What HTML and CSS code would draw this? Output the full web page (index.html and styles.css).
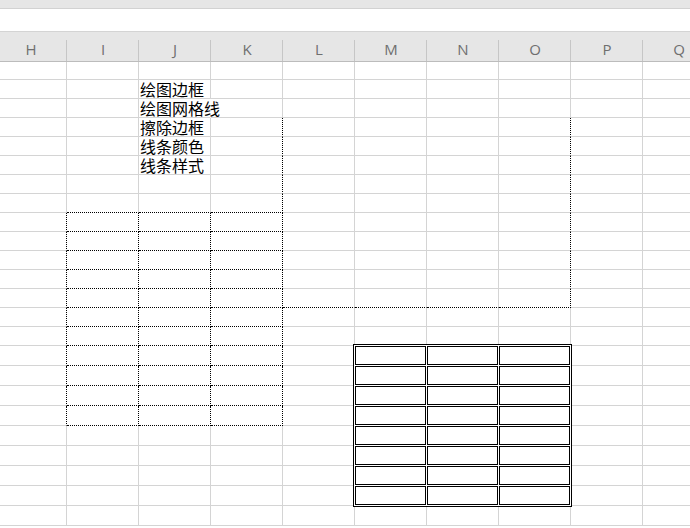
FILE: index.html
```html
<!DOCTYPE html>
<html lang="zh-CN">
<head>
<meta charset="utf-8">
<title>Sheet</title>
<link rel="stylesheet" href="styles.css">
</head>
<body>
<div class="app">
  <div class="ribbon-edge"></div>
  <div class="formula-bar"></div>
  <div class="col-headers">
    <div>H</div><div>I</div><div>J</div><div>K</div><div>L</div><div>M</div><div>N</div><div>O</div><div>P</div><div>Q</div>
  </div>
  <div class="sheet">
    <div class="cells">
      <div></div><div></div><div></div><div></div><div></div><div></div><div></div><div></div><div></div><div></div>
      <div></div><div></div><div class="txt">绘图边框</div><div></div><div></div><div></div><div></div><div></div><div></div><div></div>
      <div></div><div></div><div class="txt sp">绘图网格线</div><div></div><div></div><div></div><div></div><div></div><div></div><div></div>
      <div></div><div></div><div class="txt">擦除边框</div><div class="dr"></div><div></div><div></div><div></div><div class="dr"></div><div></div><div></div>
      <div></div><div></div><div class="txt">线条颜色</div><div class="dr"></div><div></div><div></div><div></div><div class="dr"></div><div></div><div></div>
      <div></div><div></div><div class="txt">线条样式</div><div class="dr"></div><div></div><div></div><div></div><div class="dr"></div><div></div><div></div>
      <div></div><div></div><div></div><div class="dr"></div><div></div><div></div><div></div><div class="dr"></div><div></div><div></div>
      <div></div><div class="db"></div><div class="db"></div><div class="dx"></div><div></div><div></div><div></div><div class="dr"></div><div></div><div></div>
      <div class="dr"></div><div class="dx"></div><div class="dx"></div><div class="dx"></div><div></div><div></div><div></div><div class="dr"></div><div></div><div></div>
      <div class="dr"></div><div class="dx"></div><div class="dx"></div><div class="dx"></div><div></div><div></div><div></div><div class="dr"></div><div></div><div></div>
      <div class="dr"></div><div class="dx"></div><div class="dx"></div><div class="dx"></div><div></div><div></div><div></div><div class="dr"></div><div></div><div></div>
      <div class="dr"></div><div class="dx"></div><div class="dx"></div><div class="dx"></div><div></div><div></div><div></div><div class="dr"></div><div></div><div></div>
      <div class="dr"></div><div class="dx"></div><div class="dx"></div><div class="dx"></div><div class="db"></div><div class="db"></div><div class="db"></div><div class="dx"></div><div></div><div></div>
      <div class="dr"></div><div class="dx"></div><div class="dx"></div><div class="dx"></div><div></div><div></div><div></div><div></div><div></div><div></div>
      <div class="dr"></div><div class="dx"></div><div class="dx"></div><div class="dx"></div><div></div><div></div><div></div><div></div><div></div><div></div>
      <div class="dr"></div><div class="dx"></div><div class="dx"></div><div class="dx"></div><div></div><div></div><div></div><div></div><div></div><div></div>
      <div class="dr"></div><div class="dx"></div><div class="dx"></div><div class="dx"></div><div></div><div></div><div></div><div></div><div></div><div></div>
      <div class="dr"></div><div class="dx"></div><div class="dx"></div><div class="dx"></div><div></div><div></div><div></div><div></div><div></div><div></div>
      <div class="dr"></div><div class="dx"></div><div class="dx"></div><div class="dx"></div><div></div><div></div><div></div><div></div><div></div><div></div>
      <div></div><div></div><div></div><div></div><div></div><div></div><div></div><div></div><div></div><div></div>
      <div></div><div></div><div></div><div></div><div></div><div></div><div></div><div></div><div></div><div></div>
      <div></div><div></div><div></div><div></div><div></div><div></div><div></div><div></div><div></div><div></div>
      <div></div><div></div><div></div><div></div><div></div><div></div><div></div><div></div><div></div><div></div>
      <div></div><div></div><div></div><div></div><div></div><div></div><div></div><div></div><div></div><div></div>
    </div>
    <div class="overlay">
      <div class="double-table">
        <div></div><div></div><div></div>
        <div></div><div></div><div></div>
        <div></div><div></div><div></div>
        <div></div><div></div><div></div>
        <div></div><div></div><div></div>
        <div></div><div></div><div></div>
        <div></div><div></div><div></div>
        <div></div><div></div><div></div>
      </div>
    </div>
  </div>
</div>
</body>
</html>
```
FILE: styles.css
```css
html, body {
  margin: 0;
  padding: 0;
  background: #ffffff;
  overflow: hidden;
}

.app {
  width: 690px;
  height: 528px;
  overflow: hidden;
  font-family: "Noto Sans CJK SC", "Noto Sans", sans-serif;
}

.ribbon-edge {
  height: 8px;
  background: #e6e6e6;
  border-bottom: 1px solid #d2d2d2;
}

.formula-bar {
  height: 22px;
  background: #ffffff;
  border-bottom: 1px solid #d4d4d4;
}

.col-headers {
  display: grid;
  grid-template-columns: repeat(10, 72px);
  margin-left: -5px;
  height: 29px;
  background: #e6e6e6;
  border-bottom: 1px solid #bcbcbc;
}

.col-headers > div {
  box-sizing: border-box;
  height: 29px;
  padding-top: 7px;
  line-height: 20px;
  text-align: center;
  font-family: "Open Sans", "Noto Sans", sans-serif;
  font-size: 15px;
  color: #6f6f6f;
  background-image: linear-gradient(#c6c6c6, #c6c6c6);
  background-size: 1px 21px;
  background-position: right bottom;
  background-repeat: no-repeat;
}

.sheet {
  display: grid;
  margin-left: -5px;
}

.cells,
.overlay {
  grid-area: 1 / 1;
  display: grid;
  grid-template-columns: repeat(10, 72px);
  grid-template-rows: 18px repeat(14, 19px) repeat(10, 20px);
}

.cells > div {
  box-sizing: border-box;
  border-right: 1px solid #d4d4d4;
  border-bottom: 1px solid #d4d4d4;
  white-space: nowrap;
  overflow: visible;
}

.cells > .txt {
  font-size: 16px;
  line-height: 18px;
  padding-left: 1px;
  color: #000;
}

.cells > .sp {
  border-right-color: #ffffff;
}

.cells > .dr {
  border-right: 1px dotted #000;
}

.cells > .db {
  border-bottom: 1px dotted #000;
}

.cells > .dx {
  border-right: 1px dotted #000;
  border-bottom: 1px dotted #000;
}

.overlay {
  pointer-events: none;
}

.double-table {
  grid-column: 6 / 9;
  grid-row: 16 / 24;
  margin: -2px -1px -1px -2px;
  box-sizing: border-box;
  border: 1px solid #000;
  padding: 1px;
  background: #ffffff;
  display: grid;
  grid-template-columns: repeat(3, 71px);
  grid-template-rows: repeat(8, 19px);
  gap: 1px;
}

.double-table > div {
  box-sizing: border-box;
  border: 1px solid #000;
}
```
